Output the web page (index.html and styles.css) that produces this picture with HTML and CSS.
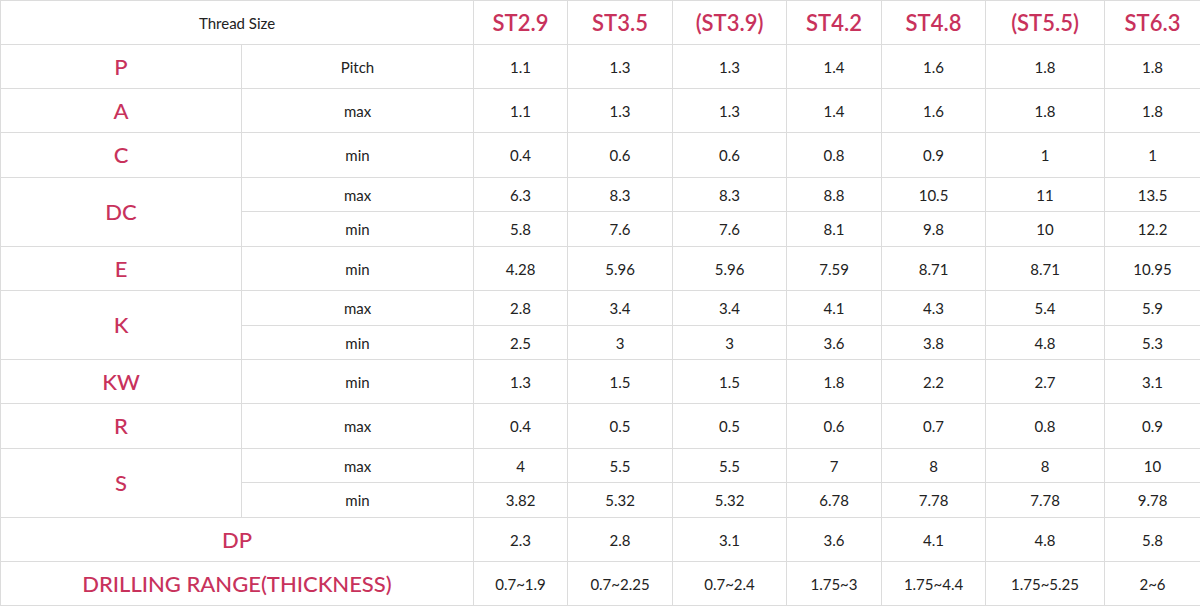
FILE: index.html
```html
<!DOCTYPE html>
<html>
<head>
<meta charset="utf-8">
<link rel="stylesheet" href="styles.css">
</head>
<body>
<table class="spec">
<colgroup>
<col class="c-label"><col class="c-sub"><col class="c1"><col class="c2"><col class="c3"><col class="c4"><col class="c5"><col class="c6"><col class="c7">
</colgroup>
<tbody>
<tr class="h44"><td colspan="2" class="th">Thread Size</td><td class="hd">ST2.9</td><td class="hd">ST3.5</td><td class="hd">(ST3.9)</td><td class="hd">ST4.2</td><td class="hd">ST4.8</td><td class="hd">(ST5.5)</td><td class="hd">ST6.3</td></tr>
<tr class="h44"><td class="lb">P</td><td>Pitch</td><td>1.1</td><td>1.3</td><td>1.3</td><td>1.4</td><td>1.6</td><td>1.8</td><td>1.8</td></tr>
<tr class="h44"><td class="lb">A</td><td>max</td><td>1.1</td><td>1.3</td><td>1.3</td><td>1.4</td><td>1.6</td><td>1.8</td><td>1.8</td></tr>
<tr class="h45"><td class="lb">C</td><td>min</td><td>0.4</td><td>0.6</td><td>0.6</td><td>0.8</td><td>0.9</td><td>1</td><td>1</td></tr>
<tr class="h34"><td class="lb" rowspan="2">DC</td><td>max</td><td>6.3</td><td>8.3</td><td>8.3</td><td>8.8</td><td>10.5</td><td>11</td><td>13.5</td></tr>
<tr class="h35"><td>min</td><td>5.8</td><td>7.6</td><td>7.6</td><td>8.1</td><td>9.8</td><td>10</td><td>12.2</td></tr>
<tr class="h44"><td class="lb">E</td><td>min</td><td>4.28</td><td>5.96</td><td>5.96</td><td>7.59</td><td>8.71</td><td>8.71</td><td>10.95</td></tr>
<tr class="h35"><td class="lb" rowspan="2">K</td><td>max</td><td>2.8</td><td>3.4</td><td>3.4</td><td>4.1</td><td>4.3</td><td>5.4</td><td>5.9</td></tr>
<tr class="h34"><td>min</td><td>2.5</td><td>3</td><td>3</td><td>3.6</td><td>3.8</td><td>4.8</td><td>5.3</td></tr>
<tr class="h44"><td class="lb">KW</td><td>min</td><td>1.3</td><td>1.5</td><td>1.5</td><td>1.8</td><td>2.2</td><td>2.7</td><td>3.1</td></tr>
<tr class="h45"><td class="lb">R</td><td>max</td><td>0.4</td><td>0.5</td><td>0.5</td><td>0.6</td><td>0.7</td><td>0.8</td><td>0.9</td></tr>
<tr class="h34"><td class="lb" rowspan="2">S</td><td>max</td><td>4</td><td>5.5</td><td>5.5</td><td>7</td><td>8</td><td>8</td><td>10</td></tr>
<tr class="h35"><td>min</td><td>3.82</td><td>5.32</td><td>5.32</td><td>6.78</td><td>7.78</td><td>7.78</td><td>9.78</td></tr>
<tr class="h44"><td class="lb" colspan="2">DP</td><td>2.3</td><td>2.8</td><td>3.1</td><td>3.6</td><td>4.1</td><td>4.8</td><td>5.8</td></tr>
<tr class="h44"><td class="lb" colspan="2">DRILLING RANGE(THICKNESS)</td><td>0.7~1.9</td><td>0.7~2.25</td><td>0.7~2.4</td><td>1.75~3</td><td>1.75~4.4</td><td>1.75~5.25</td><td>2~6</td></tr>
</tbody>
</table>
</body>
</html>
```
FILE: styles.css
```css
html, body {
  margin: 0;
  padding: 0;
  background: #fff;
}
body {
  font-family: Lato, "Open Sans", sans-serif;
  color: #222;
}
.spec {
  border-collapse: collapse;
  table-layout: fixed;
  width: 1200px;
}
.c-label { width: 241px; }
.c-sub { width: 232px; }
.c1 { width: 94px; }
.c2 { width: 105px; }
.c3 { width: 114px; }
.c4 { width: 95px; }
.c5 { width: 104px; }
.c6 { width: 119px; }
.c7 { width: 96px; }
.spec td {
  border: 1px solid #dcdcdc;
  text-align: center;
  vertical-align: middle;
  padding: 0;
  font-size: 15px;
  line-height: 18px;
}
.h44 { height: 44px; }
.h45 { height: 45px; }
.h34 { height: 34px; }
.h35 { height: 35px; }
.spec td.th {
  font-size: 15px;
}
.spec td.hd {
  color: #c8325c;
  font-size: 22px;
  font-weight: 600;
  line-height: 24px;
}
.spec td.lb {
  color: #c8325c;
  font-size: 22px;
  font-weight: 500;
  line-height: 24px;
}
```
